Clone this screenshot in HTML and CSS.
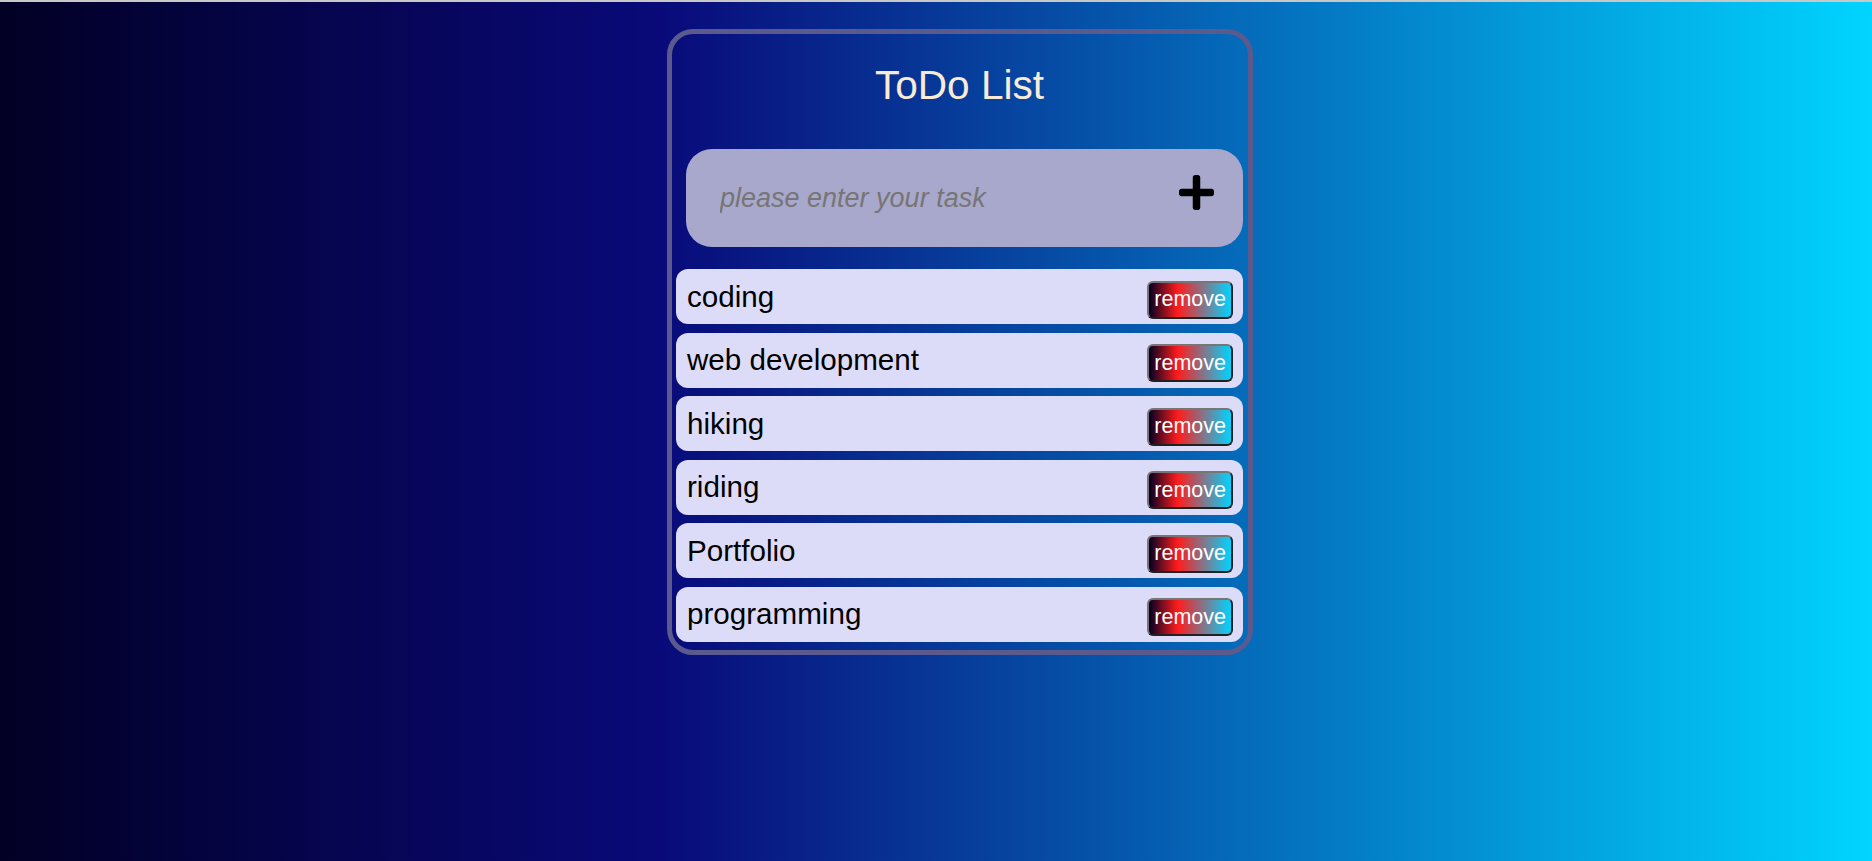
FILE: index.html
```html
<!DOCTYPE html>
<html lang="en">
<head>
<meta charset="utf-8">
<title>ToDo List</title>
<link rel="stylesheet" href="styles.css">
</head>
<body>
<div class="card">
  <h1 class="title">ToDo List</h1>
  <form class="add-form">
    <input class="task-input" type="text" placeholder="please enter your task" autofocus>
    <button class="add-btn" type="button" aria-label="add">
      <svg viewBox="0 32 448 448" width="35" height="35"><path d="M416 208H272V64c0-17.670-14.330-32-32-32h-32c-17.670 0-32 14.330-32 32v144H32c-17.670 0-32 14.330-32 32v32c0 17.670 14.330 32 32 32h144v144c0 17.670 14.330 32 32 32h32c17.670 0 32-14.330 32-32V304h144c17.670 0 32-14.330 32-32v-32c0-17.670-14.330-32-32-32z" fill="#000"/></svg>
    </button>
  </form>
  <ul class="list">
    <li class="item"><span class="item-text">coding</span><button class="remove">remove</button></li>
    <li class="item"><span class="item-text">web development</span><button class="remove">remove</button></li>
    <li class="item"><span class="item-text">hiking</span><button class="remove">remove</button></li>
    <li class="item"><span class="item-text">riding</span><button class="remove">remove</button></li>
    <li class="item"><span class="item-text">Portfolio</span><button class="remove">remove</button></li>
    <li class="item"><span class="item-text">programming</span><button class="remove">remove</button></li>
  </ul>
</div>
</body>
</html>
```
FILE: styles.css
```css
html {
  border-top: 2px solid #c8c8c8;
}
body {
  margin: 0;
  min-height: 859px;
  background: linear-gradient(90deg, #020024 0%, #090979 35%, #00d4ff 100%);
  font-family: "Liberation Sans", Arial, sans-serif;
  padding-top: 27px;
  box-sizing: border-box;
}
.card {
  width: 586px;
  box-sizing: border-box;
  margin-left: calc(50% - 269px);
  border: 5px solid #5b5a8e;
  border-radius: 26px;
  padding: 0 5px 8px 4px;
}
.title {
  margin: 0;
  padding-top: 28px;
  font-size: 40.6px;
  line-height: 46px;
  font-weight: normal;
  text-align: center;
  color: #faebd7;
}
.add-form {
  margin: 41px 0 22px 10px;
  height: 98px;
  background: #a7a8cc;
  border-radius: 26px;
  display: flex;
  align-items: center;
  padding: 0 29px 0 34px;
}
.task-input {
  flex: 1;
  border: none;
  outline: none;
  background: transparent;
  font-family: "Liberation Sans", Arial, sans-serif;
  font-size: 27px;
  color: #000;
  padding: 0;
  height: 32px;
  caret-color: #000;
}
.task-input::placeholder {
  color: #777575;
  font-style: italic;
}
.add-btn {
  border: none;
  background: none;
  padding: 0;
  width: 35px;
  height: 35px;
  margin-top: -12px;
  display: flex;
}
.list {
  list-style: none;
  margin: 0;
  padding: 0;
  display: flex;
  flex-direction: column;
  gap: 8.6px;
}
.item {
  height: 55px;
  background: #dddcf8;
  border-radius: 12px;
  display: flex;
  align-items: center;
  justify-content: space-between;
  padding: 0 10px 0 11px;
}
.item-text {
  font-size: 29.6px;
  color: #000;
}
.remove {
  height: 38px;
  margin-top: 6px;
  padding: 0 5px;
  border: 2px outset #767676;
  border-radius: 6px;
  background: linear-gradient(90deg, #020024 0%, #ff1c1c 35%, #00d4ff 100%);
  color: #fff;
  font-family: "Liberation Sans", Arial, sans-serif;
  font-size: 21.5px;
}
```
